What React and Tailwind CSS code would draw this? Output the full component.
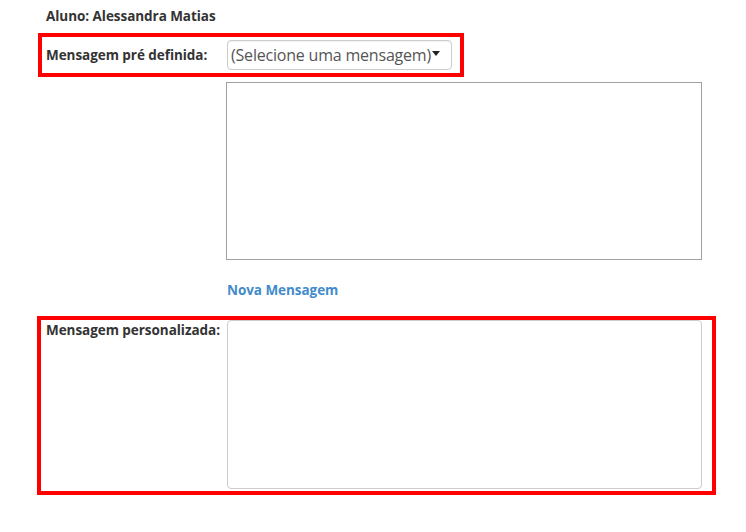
export default function App() {
  return (
    <div className="min-h-[532px] bg-white text-[#333] font-['Open_Sans',sans-serif]">
      <div className="pt-[6px] pl-[46px] text-[13.5px] font-bold leading-[20px] tracking-[-0.05px]">Aluno: Alessandra Matias</div>

      {/* Mensagem pré definida */}
      <div className="mt-[7px] ml-[38px] w-[426px] h-[44px] border-4 border-[#ff0000] flex items-center">
        <label className="w-[185px] pl-[4px] text-[13.5px] font-bold leading-[20px] tracking-[-0.05px]">Mensagem pré definida:</label>
        <div className="w-[225px] h-[30px] border border-[#ccc] rounded-[4px] shadow-[inset_0_1px_1px_rgba(0,0,0,0.06)] flex items-center pl-[3px] text-[16px] text-[#555]">
          <span className="tracking-[-0.2px]">(Selecione uma mensagem)</span>
          <svg width="8" height="5" viewBox="0 0 8 5" className="ml-[1px] mt-[-3px]"><path d="M0 0h8L4 5z" fill="#222" /></svg>
        </div>
      </div>

      <div className="ml-[226px] mt-[5px] w-[476px] h-[178px] border border-[#a0a0a0]" />

      <div className="ml-[227px] mt-[20px] text-[13.5px] font-bold leading-[20px] tracking-[-0.05px] text-[#428bca]">Nova Mensagem</div>

      {/* Mensagem personalizada */}
      <div className="mt-[16px] ml-[37px] w-[679px] h-[179px] border-4 border-[#ff0000] flex items-start">
        <label className="w-[186px] pl-[5px] text-[13.5px] font-bold leading-[20px] tracking-[-0.05px]">Mensagem personalizada:</label>
        <div className="w-[475px] h-[169px] border border-[#ccc] rounded-[4px]" />
      </div>
    </div>
  )
}
